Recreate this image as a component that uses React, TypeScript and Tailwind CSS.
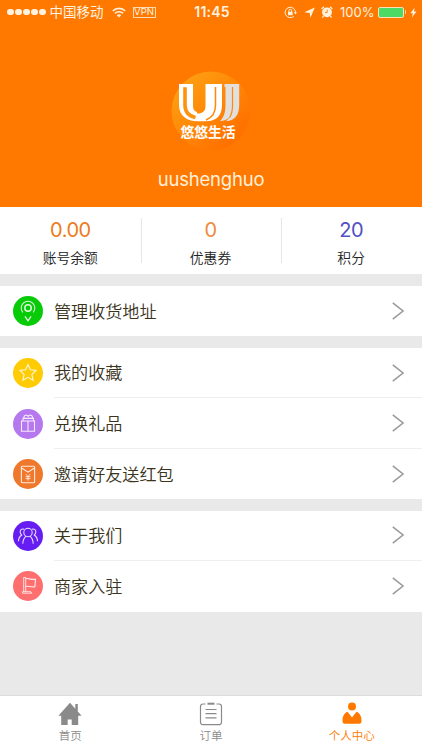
import React from 'react';

type Row = { label: string; color: string; icon: React.ReactNode };

const PinIcon = () => (
  <>
    <circle cx="15" cy="12" r="3.2" strokeWidth="1.5" />
    <path d="M9.8 16.4a6.8 6.8 0 1 1 10.4 0" />
    <path d="M12 20.4l3 4.4 3-4.4" strokeWidth="1.4" />
  </>
);

const StarIcon = () => (
  <path d="M15 6.6l2.4 5.2 5.6.7-4.1 3.9 1.1 5.8-5-2.9-5 2.9 1.1-5.8L7 12.5l5.6-.7z" />
);

const GiftIcon = () => (
  <>
    <path d="M8.5 12h13v10.3h-13zM10 12V9.4h10.5V12M15 12v10.3" />
    <path d="M11 9.2c-.6-3.6 3-3.8 4.2-1.8C16.4 5.4 20 5.6 19.4 9.2" />
  </>
);

const RedPacketIcon = () => (
  <>
    <rect x="8.4" y="7.3" width="13.2" height="16.4" rx="0.8" />
    <path d="M8.6 9l6.4 4.2L21.4 9" />
    <path d="M12.8 15.2l2.2 2.2 2.2-2.2M15 17.4v4.2M12.6 17.7h4.8M12.6 19.6h4.8" strokeWidth="0.9" />
  </>
);

const PeopleIcon = () => (
  <>
    <circle cx="15" cy="11.5" r="4.2" />
    <path d="M9.8 22.8c0-3.8 1.2-5.8 3.2-7.6M20.2 22.8c0-3.8-1.2-5.8-3.2-7.6" />
    <path d="M11.2 8.2c-2.6-.8-4.4 1-4 3.2.2 1.2.8 2 1.5 2.6-2 1.4-3.2 3.4-3.2 6.2" />
    <path d="M18.8 8.2c2.6-.8 4.4 1 4 3.2-.2 1.2-.8 2-1.5 2.6 2 1.4 3.2 3.4 3.2 6.2" />
  </>
);

const FlagIcon = () => (
  <>
    <path d="M10.7 20.5V6.5h2v14M9.5 20.7h8.3l1 1.500H9.500z" strokeWidth="0.9" />
    <path d="M12.7 7.8c3.2-1.2 4.4 1.4 9.8.4l-.6 7.4c-4.4 1-6-1.2-9.2-.2" />
  </>
);

const groups: Row[][] = [
  [{ label: '管理收货地址', color: 'bg-[#06cb06]', icon: <PinIcon /> }],
  [
    { label: '我的收藏', color: 'bg-[#ffcb05]', icon: <StarIcon /> },
    { label: '兑换礼品', color: 'bg-[#b678ee]', icon: <GiftIcon /> },
    { label: '邀请好友送红包', color: 'bg-[#f0782d]', icon: <RedPacketIcon /> },
  ],
  [
    { label: '关于我们', color: 'bg-[#651df2]', icon: <PeopleIcon /> },
    { label: '商家入驻', color: 'bg-[#ff6f6f]', icon: <FlagIcon /> },
  ],
];

const stats = [
  { value: '0.00', label: '账号余额', color: 'text-[#ee7a1c]' },
  { value: '0', label: '优惠券', color: 'text-[#f08a3c]' },
  { value: '20', label: '积分', color: 'text-[#544fc4]' },
];

const StatusBar = () => (
  <div className="grid h-6 grid-cols-[1fr_auto_1fr] items-center pl-[7px] pr-[5px] text-[#fff3e0]">
    <div className="flex items-center">
      <div className="flex gap-[1.5px]">
        {[0, 1, 2, 3, 4].map((i) => (
          <span key={i} className="size-[6.5px] rounded-full bg-[#fff3e0]" />
        ))}
      </div>
      <span className="ml-[4px] pt-px text-[13.5px] leading-none">中国移动</span>
      <svg className="ml-[8px] h-[11px] w-[14px]" viewBox="0 0 14 11" fill="none" stroke="currentColor" strokeWidth="1.7">
        <path d="M.8 4a8.8 8.8 0 0 1 12.4 0M3 6.4a5.7 5.7 0 0 1 8 0" />
        <path d="M7 10.6L4.8 8.3a3.1 3.1 0 0 1 4.4 0z" fill="currentColor" stroke="none" />
      </svg>
      <span className="ml-[7px] flex h-[11px] w-[23px] items-center justify-center border border-[#ffd9b0] text-[9.5px] leading-none">VPN</span>
    </div>
    <span className="text-[14px] font-semibold leading-none tracking-[0.2px]">11:45</span>
    <div className="flex items-center justify-end">
      <svg className="size-[13px]" viewBox="0 0 13 13" fill="none" stroke="currentColor">
        <path d="M11.5 6.5a5.2 5.2 0 1 0-1.7 3.8" />
        <path d="M9.8 6.2h3.2l-1.6 2.2z" fill="currentColor" stroke="none" />
        <path d="M4.9 6V4.7a1.4 1.4 0 0 1 2.8 0V6" />
        <rect x="4" y="5.8" width="4.6" height="3.4" fill="currentColor" stroke="none" />
      </svg>
      <svg className="ml-[7px] size-[11px]" viewBox="0 0 11 11" fill="currentColor">
        <path d="M10.8.5L6.4 10.8 5.7 5.9.3 5.3z" />
      </svg>
      <svg className="ml-[6px] h-[12px] w-[12px]" viewBox="0 0 12 12" fill="currentColor">
        <circle cx="6" cy="6.3" r="4.9" />
        <path d="M.6 3L3 .7M11.4 3L9 .7M2.6 10l-1.2 1.6M9.4 10l1.2 1.6" stroke="currentColor" strokeWidth="1.2" />
        <path d="M6.2 3.6v3H4" fill="none" stroke="#ff7900" strokeWidth="0.9" />
      </svg>
      <span className="ml-[7px] text-[13px] leading-none">100%</span>
      <span className="ml-[3px] h-[11px] w-[26px] rounded-[2px] border border-[#ffe0b8] bg-[#4cd964]" />
      <span className="ml-px h-[4px] w-[1.5px] rounded-r bg-[#ffe0b8]" />
      <svg className="ml-[4px] h-[11px] w-[7px]" viewBox="0 0 7 11" fill="currentColor">
        <path d="M4.8.5L.4 6.2h2.5L1.8 10.5l4.7-6H3.9z" />
      </svg>
    </div>
  </div>
);

const Logo = () => (
  <svg className="size-[80px]" viewBox="0 0 80 80">
    <defs>
      <linearGradient id="disc" x1="0.1" y1="0.1" x2="0.8" y2="0.8">
        <stop offset="0" stopColor="#ffa012" />
        <stop offset="0.5" stopColor="#ff8a08" />
        <stop offset="1" stopColor="#ff7200" />
      </linearGradient>
    </defs>
    <circle cx="40" cy="40" r="39.5" fill="url(#disc)" />
    {/* grey ribbon behind the letter */}
    <path d="M53.5 13H68.2V34c0 10.500-4.500 15.500-13.200 16.300 1.500-1.200 2.600-2.600 3.500-4-2.400 2.300-5.400 3.600-9.500 4 3.800-4 5.500-9 5.500-16.500V16h-1z" fill="#e2dfdf" />
    <path d="M61.500 16V35c0 5-1 8.500-3 11.800" fill="none" stroke="#ff8a08" strokeWidth="1.2" />
    {/* white U */}
    <path d="M8 13h14V35c0 3.500 1.200 5.300 4 6v1.500c5.800.3 8.500-2.600 8.500-7.500V13H51V34c0 11-6 16.300-16 16.300H27C15.500 50.300 8 44.500 8 34z" fill="#fff" />
    <path d="M14 16.300V34c0 6.500 3.600 11 10.500 12.500" fill="none" stroke="#ff9310" strokeWidth="3.6" />
    <path d="M44.500 16V34c0 8-3.600 12.800-9.500 15" fill="none" stroke="#ff8a08" strokeWidth="1.5" />
    <text x="37" y="66.4" textAnchor="middle" fontSize="13.8" fontWeight="700" fill="#fff">悠悠生活</text>
  </svg>
);

const Chevron = () => (
  <svg className="h-[18px] w-[13px]" viewBox="0 0 13 18" fill="none" stroke="#9b9b9b" strokeWidth="1.6">
    <path d="M.8.8L11 9 .8 17.2" />
  </svg>
);

const App = () => {
  return (
    <div className="flex h-[750px] w-[422px] flex-col overflow-hidden bg-[#e9e9e9] font-[Inter,'Noto_Sans_CJK_SC',sans-serif]">
      <header className="flex h-[207px] flex-col bg-[#ff7900]">
        <StatusBar />
        <div className="flex flex-col items-center pt-[47px]">
          <Logo />
          <h1 className="mt-[14px] text-[18.5px] font-normal leading-7 tracking-[-0.2px] text-[#fff0dc]">uushenghuo</h1>
        </div>
      </header>

      <section className="grid h-[67px] grid-cols-3 bg-white py-[11px]">
        {stats.map((s) => (
          <div key={s.label} className="flex h-[45px] flex-col items-center border-l border-[#e6e6e6] pr-[2px] first:border-l-0 first:pr-0">
            <span className={`mt-[2px] text-[20px] leading-5 tracking-[-0.5px] ${s.color}`}>{s.value}</span>
            <span className="mt-[8px] text-[13.8px] font-[350] leading-5 text-[#222]">{s.label}</span>
          </div>
        ))}
      </section>

      <main className="flex flex-1 flex-col gap-[11.5px] pt-[12px]">
        {groups.map((rows, i) => (
          <ul key={i} className="bg-white">
            {rows.map((row) => (
              <li key={row.label} className="group flex h-[50.45px] items-center pl-[13px]">
                <span className={`size-[30px] shrink-0 rounded-full ${row.color}`}>
                  <svg className="size-[30px]" viewBox="0 0 30 30" fill="none" stroke="#fff" strokeOpacity="0.85" strokeWidth="1.1">
                    {row.icon}
                  </svg>
                </span>
                <div className="ml-[11px] flex h-full flex-1 items-center justify-between border-b border-[#eee] pr-[17px] group-last:border-b-0">
                  <span className="pt-px text-[17.1px] font-[350] leading-6 text-[#3a341c]">{row.label}</span>
                  <Chevron />
                </div>
              </li>
            ))}
          </ul>
        ))}
      </main>

      <nav className="grid h-[55px] grid-cols-3 border-t border-[#dcdcdc] bg-white text-[11.5px] font-[350] leading-4 text-[#8a8a8a]">
        <a className="flex flex-col items-center pt-[6px]">
          <svg className="h-[24px] w-[24px]" viewBox="0 0 24 24" fill="#8a8a8a">
            <path d="M12 .8L.4 13.8h2.8V23h6.5v-5.5h4V23h6.5v-9.2h3.4L19.8 9.5V2h-2.5v4.8z" />
          </svg>
          <span className="mt-[2px]">首页</span>
        </a>
        <a className="flex flex-col items-center pt-[6px]">
          <svg className="h-[24px] w-[24px]" viewBox="0 0 24 24" fill="none" stroke="#8a8a8a" strokeWidth="1.2">
            <path d="M6.500 2H4a2.500 2.500 0 0 0-2.500 2.500v15.700A2.500 2.500 0 0 0 4 22.700h16a2.500 2.500 0 0 0 2.500-2.500V4.500A2.500 2.500 0 0 0 20 2h-2.500" />
            <path d="M8.500 1.700h7" strokeWidth="2" />
            <path d="M6.500 7.500h11M6.500 11.700h11M6.500 15.900h11" />
          </svg>
          <span className="mt-[2px]">订单</span>
        </a>
        <a className="flex flex-col items-center pt-[6px] text-[#ff7900]">
          <svg className="h-[24px] w-[24px]" viewBox="0 0 24 24" fill="currentColor">
            <circle cx="12" cy="4.600" r="4" />
            <path d="M7.5 9.8L12 15.500l4.500-5.700c3.400 1.200 5 4.800 5 9 0 2-.6 3-2.500 3H5c-1.900 0-2.500-1-2.500-3 0-4.200 1.600-7.800 5-9z" />
          </svg>
          <span className="mt-[2px]">个人中心</span>
        </a>
      </nav>
    </div>
  );
};

export default App;
